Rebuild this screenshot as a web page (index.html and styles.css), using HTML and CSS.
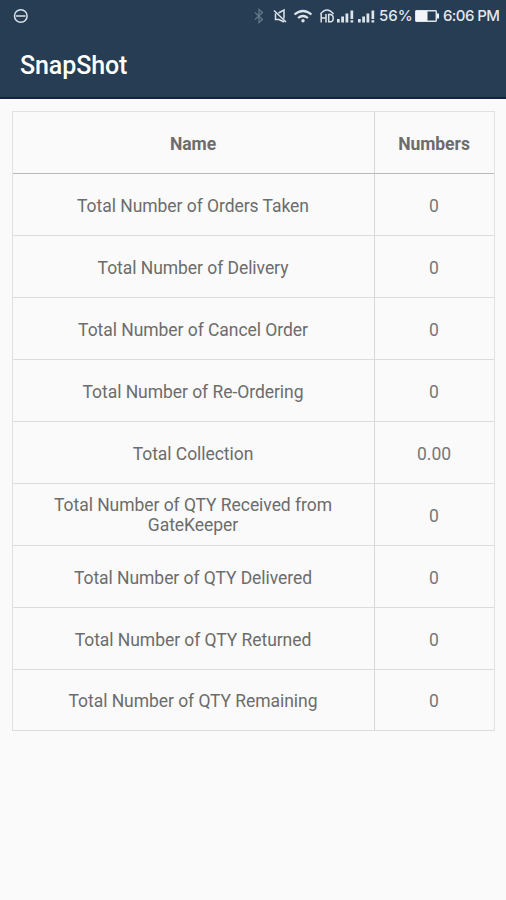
FILE: index.html
```html
<!DOCTYPE html>
<html lang="en">
<head>
  <meta charset="UTF-8">
  <title>SnapShot</title>
  <link rel="stylesheet" href="styles.css">
</head>
<body>
  <header>
    <div class="status-bar">
      <svg class="dnd" width="16" height="16" viewBox="0 0 16 16">
        <circle cx="7.800" cy="8" r="6.300"/>
        <path d="M3 8h9.500"/>
      </svg>

      <div class="status-right">
        <svg class="bluetooth" width="12" height="16" viewBox="0 0 12 16">
          <path d="M2 4.500l7.500 7L6 14.500v-13l3.500 3-7.500 7"/>
        </svg>
        <svg class="mute" width="14" height="16" viewBox="0 0 14 16">
          <path d="M1 2.500l12 11.500M2.500 5.500v6h3.500l5 2.500M5.500 5l5.500-3v8.500"/>
        </svg>
        <svg class="wifi" width="20" height="16" viewBox="0 0 20 16">
          <path d="M1.500 6.500q8.500-7 17 0M5 10q5-4 10 0"/>
          <circle cx="10" cy="12.700" r="1.700"/>
        </svg>
        <svg class="volte" width="16" height="16" viewBox="0 0 16 16">
          <path d="M1.500 6q6.500-8 13 0"/>
          <path d="M2.200 6v8.500M7 6v8.500M2.200 10h4.800M9.700 6.500v7.300h1.500q3 0 3-3.600t-3-3.700z"/>
        </svg>
        <svg class="signal" width="18" height="16" viewBox="0 0 18 16">
          <path d="M0 11h2.700v3.500H0zM4.200 8.500h2.800v6H4.200zM8.500 5.500h2.800v9H8.500zM13.500 2.500h2.700v8.500h-2.700zM13.500 12.200h2.700v2.300h-2.700z"/>
        </svg>
        <svg class="signal" width="18" height="16" viewBox="0 0 18 16">
          <path d="M0 11h2.700v3.500H0zM4.200 8.500h2.800v6H4.200zM8.500 5.500h2.800v9H8.500zM13.500 2.500h2.700v8.500h-2.700zM13.500 12.200h2.700v2.300h-2.700z"/>
        </svg>
        <span class="percent">56%</span>
        <svg class="battery" width="24" height="12" viewBox="0 0 24 12">
          <rect class="shell" x=".7" y=".7" width="20.600" height="10.600" rx="1"/>
          <path d="M1 1h11.500v10H1zM22 3.500h2v5h-2z"/>
        </svg>
        <span class="time">6:06 PM</span>
      </div>
    </div>
    <h1>SnapShot</h1>
  </header>

  <table>
    <thead>
      <tr><th>Name</th><th class="num">Numbers</th></tr>
    </thead>
    <tbody>
      <tr><td>Total Number of Orders Taken</td><td>0</td></tr>
      <tr><td>Total Number of Delivery</td><td>0</td></tr>
      <tr><td>Total Number of Cancel Order</td><td>0</td></tr>
      <tr><td>Total Number of Re-Ordering</td><td>0</td></tr>
      <tr><td>Total Collection</td><td>0.00</td></tr>
      <tr class="two-line"><td>Total Number of QTY Received from GateKeeper</td><td>0</td></tr>
      <tr><td>Total Number of QTY Delivered</td><td>0</td></tr>
      <tr><td>Total Number of QTY Returned</td><td>0</td></tr>
      <tr><td>Total Number of QTY Remaining</td><td>0</td></tr>
    </tbody>
  </table>
</body>
</html>
```

FILE: styles.css
```css
body {
  font-family: Roboto, sans-serif;
  background-color: #fafafa;
  color: #6c6c6c;
  margin: 0;
}

header {
  background-color: #263d53;
  color: #fff;
  height: 99px;
  box-sizing: border-box;
  border-bottom: 2px solid #102343;
}

.status-bar {
  display: flex;
  justify-content: space-between;
  align-items: center;
  height: 31px;
  padding: 0 7px 0 13px;
  color: #e3e8ed;
}

.status-right {
  display: flex;
  align-items: center;
  font-family: Inter, sans-serif;
  font-size: 15px;
  font-weight: 500;
}

svg {
  display: block;
  flex: none;
  fill: none;
  stroke: #dce3ea;
  stroke-width: 1.5;
}

.bluetooth {
  margin-right: 8px;
  stroke: #61778a;
  stroke-width: 1.3;
}

.mute {
  margin-right: 6px;
}

.wifi {
  margin-right: 6px;
  stroke-width: 2.2;
}

.wifi circle {
  fill: #dce3ea;
  stroke: none;
}

.volte {
  margin-right: 2px;
}

.signal {
  margin-right: 3px;
  fill: #dce3ea;
  stroke: none;
}

.percent {
  width: 33px;
  margin-right: 3px;
}

.battery {
  margin-right: 4px;
  fill: #f2f5f8;
  stroke: none;
}

.battery .shell {
  fill: none;
  stroke: #dce3ea;
  stroke-width: 1.5;
}

.time {
  width: 56px;
  letter-spacing: -0.6px;
  white-space: nowrap;
}

h1 {
  margin: 0;
  padding: 20px 0 0 20px;
  font-size: 25px;
  line-height: 30px;
  letter-spacing: -0.1px;
  font-weight: 500;
}

table {
  width: 483px;
  margin: 12px 0 0 12px;
  table-layout: fixed;
  border-spacing: 0;
  border: 1px solid #e2e2e2;
  border-bottom: none;
}

th,
td {
  box-sizing: border-box;
  height: 62px;
  padding: 2px 31px 0 30px;
  border-bottom: 1px solid #dcdcdc;
  font-size: 17.5px;
  line-height: 20px;
  letter-spacing: -0.05px;
  text-align: center;
}

th {
  border-bottom-color: #b8b8b8;
  font-weight: 700;
}

th:first-child,
td:first-child {
  border-right: 1px solid #d6d6d6;
}

th.num {
  width: 119px;
  padding: 2px 1px 0 0;
}

td:last-child {
  padding: 2px 1px 0 0;
  color: #777;
}

.two-line td:first-child {
  padding-top: 0;
}

tr:last-child td {
  height: 61px;
}
```
